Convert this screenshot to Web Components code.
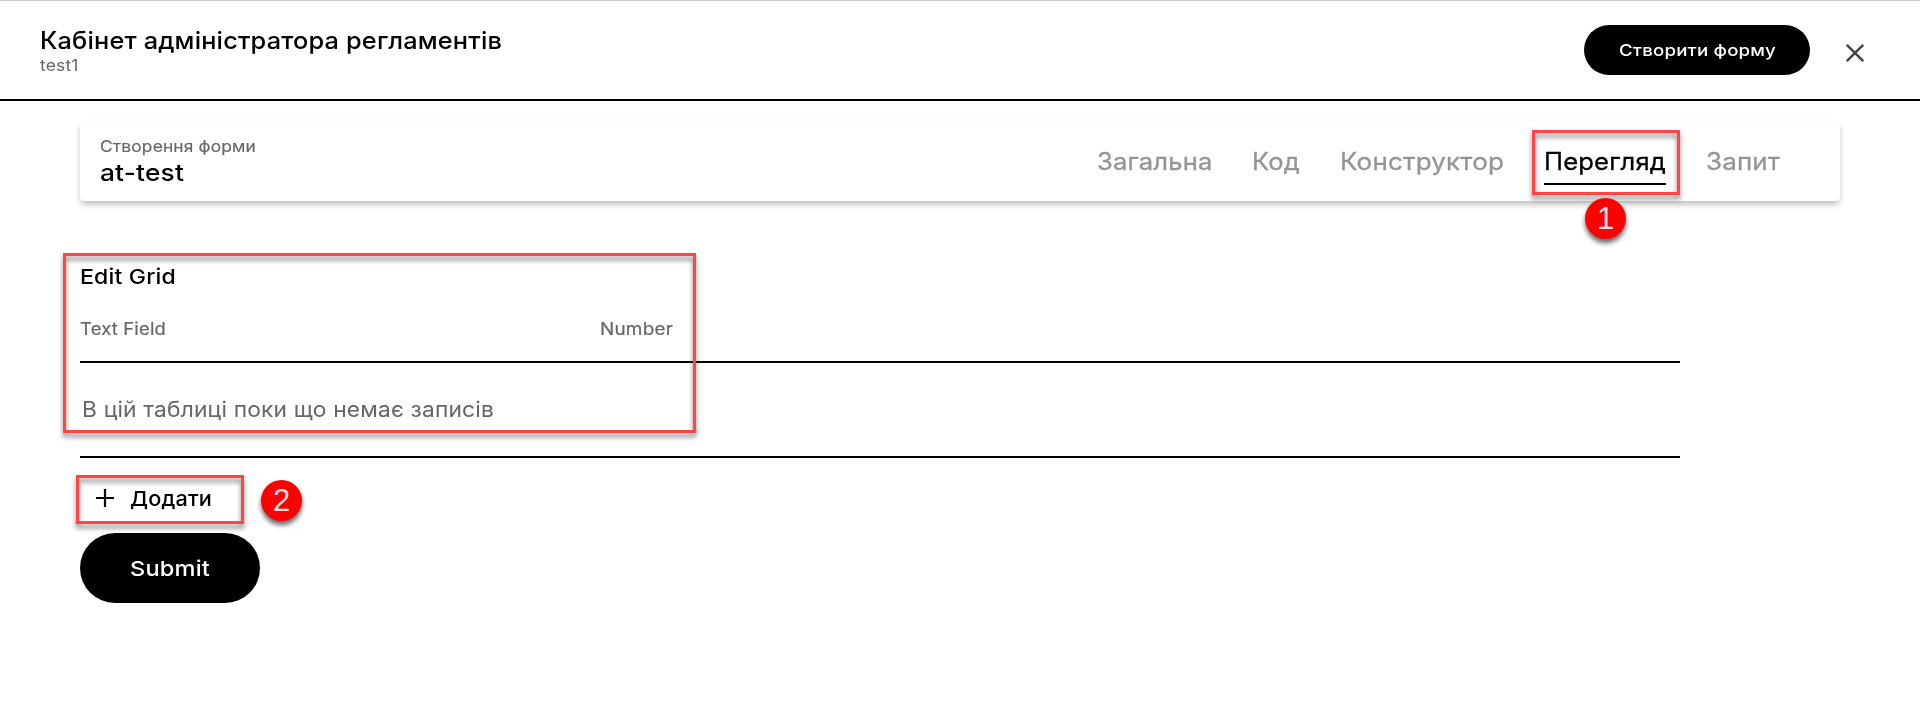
<!DOCTYPE html>
<html lang="uk">
<head>
<meta charset="utf-8">
<title>Кабінет адміністратора регламентів</title>
<style>
html,body{margin:0;background:#fff}
body{font-family:Inter,"Noto Sans",sans-serif;color:#000;height:724px;overflow:hidden}
</style>
</head>
<body>
<admin-page></admin-page>
<script>
const define = (name, html, setup) => customElements.define(name, class extends HTMLElement {
  connectedCallback() {
    if (this.shadowRoot) return;
    const t = document.createElement('template');
    t.innerHTML = html;
    this.attachShadow({mode: 'open'}).append(t.content.cloneNode(true));
    if (setup) setup(this);
  }
});

// Text widened to a given advance width.
define('fit-text', `<style>:host{display:block;white-space:nowrap}span{display:inline-block;transform-origin:0 50%;letter-spacing:.15px}</style><span><slot></slot></span>`, el => {
  const s = el.shadowRoot.querySelector('span');
  const w = +el.getAttribute('w');
  el.style.width = w + 'px';
  s.style.transform = 'scaleX(' + w / s.getBoundingClientRect().width + ')';
});

define('page-header', `<style>
:host{display:flex;box-sizing:border-box;height:101px;border-top:1px solid #ccc;border-bottom:2px solid #000;padding:24px 54px 0 40px;align-items:flex-start}
.t{flex:1}
.title{font-size:24px;line-height:31px;font-weight:500}
.sub{font-size:16px;line-height:19px;color:#666}
svg{margin:18px 0 0 35px;display:block}
</style>
<div class="t"><fit-text class="title" w="462">Кабінет адміністратора регламентів</fit-text><fit-text class="sub" w="38.5">test1</fit-text></div>
<pill-button style="--w:226px;--h:50px;--f:16px"><fit-text w="157">Створити форму</fit-text></pill-button>
<svg width="21" height="21" viewBox="0 0 21 21"><path d="M1.8 1.8 18.2 18.2M18.2 1.8 1.8 18.2" stroke="#444" stroke-width="2.5"/></svg>`);

define('pill-button', `<style>
:host{display:flex;align-items:center;justify-content:center;width:var(--w);height:var(--h);border-radius:35px;background:#000;color:#fff;font-size:var(--f);font-weight:500}
</style><slot></slot>`);

define('nav-tab', `<style>
:host{display:block;font-size:24px;line-height:30px;color:#959595;-webkit-text-stroke:.3px currentColor;padding-bottom:6px;border-bottom:2px solid transparent}
:host([active]){color:#000;border-color:#000}
</style><slot></slot>`);

define('form-card', `<style>
:host{display:flex;box-sizing:border-box;height:80px;margin:20px 80px 0;padding:15px 60px 0 19.5px;border-radius:4px;box-shadow:0 4px 7px -1px rgba(0,0,0,.28);justify-content:space-between}
.l{font-size:16px;line-height:21px;color:#666;-webkit-text-stroke:.15px currentColor}
.n{font-size:24px;line-height:31px;font-weight:500}
nav{display:flex;gap:40px;padding-top:11px;align-items:flex-start}
</style>
<div><fit-text class="l" w="156">Створення форми</fit-text><fit-text class="n" w="84">at-test</fit-text></div>
<nav>
<nav-tab><fit-text w="115.5">Загальна</fit-text></nav-tab>
<nav-tab><fit-text w="48">Код</fit-text></nav-tab>
<nav-tab><fit-text w="164">Конструктор</fit-text></nav-tab>
<nav-tab active><fit-text w="122">Перегляд</fit-text></nav-tab>
<nav-tab><fit-text w="74">Запит</fit-text></nav-tab>
</nav>`);

define('edit-grid', `<style>
:host{display:block;width:1600px;margin:63px 0 0 80px}
.h{font-size:20.5px;line-height:26px;height:24px;font-weight:500}
.cols{display:grid;grid-template-columns:520px 1fr;box-sizing:border-box;height:75px;padding-top:30px;font-size:17px;line-height:22px;color:#666;-webkit-text-stroke:.2px currentColor;border-bottom:2px solid #000}
.empty{box-sizing:border-box;height:95px;padding:34px 0 0 1.5px;font-size:21px;line-height:26px;color:#666;border-bottom:2px solid #000}
.add{display:flex;align-items:center;height:47px;margin-top:17px;padding:0 0 2px 15px;gap:15px;font-size:20.5px;font-weight:500}
.add svg{display:block;margin-top:-2px}
pill-button{margin-top:9px}
</style>
<fit-text class="h" w="96">Edit Grid</fit-text>
<div class="cols"><fit-text w="86">Text Field</fit-text><fit-text w="73">Number</fit-text></div>
<div class="empty"><fit-text w="412">В цій таблиці поки що немає записів</fit-text></div>
<div class="add"><svg width="20" height="20" viewBox="0 0 20 20"><path d="M1 10H19M10 1V19" stroke="#000" stroke-width="2.2"/></svg><fit-text w="82">Додати</fit-text></div>
<pill-button style="--w:180px;--h:70px;--f:20.5px"><fit-text w="80">Submit</fit-text></pill-button>`);

// Annotations drawn over the page content.
define('mark-frame', `<style>
:host{display:block;position:absolute;box-sizing:border-box;border:3px solid #ff4545;filter:drop-shadow(0 4px 2.5px rgba(0,0,0,.5))}
</style>`);
define('mark-badge', `<style>
:host{display:flex;position:absolute;width:41px;height:41px;border-radius:50%;background:#f00;color:#e0e0e0;align-items:center;justify-content:center;font:31px/39px "Liberation Sans",sans-serif;box-shadow:0 4px 5px rgba(0,0,0,.6)}
</style><slot></slot>`);

define('admin-page', `<style>:host{display:block;position:relative;height:724px}</style>
<page-header></page-header>
<form-card></form-card>
<edit-grid></edit-grid>
<mark-frame style="left:1532px;top:130px;width:148px;height:65px"></mark-frame>
<mark-frame style="left:63px;top:253px;width:633px;height:180px"></mark-frame>
<mark-frame style="left:76px;top:475px;width:168px;height:49px"></mark-frame>
<mark-badge style="left:1585px;top:198px">1</mark-badge>
<mark-badge style="left:261px;top:480px">2</mark-badge>`);
</script>
</body>
</html>
